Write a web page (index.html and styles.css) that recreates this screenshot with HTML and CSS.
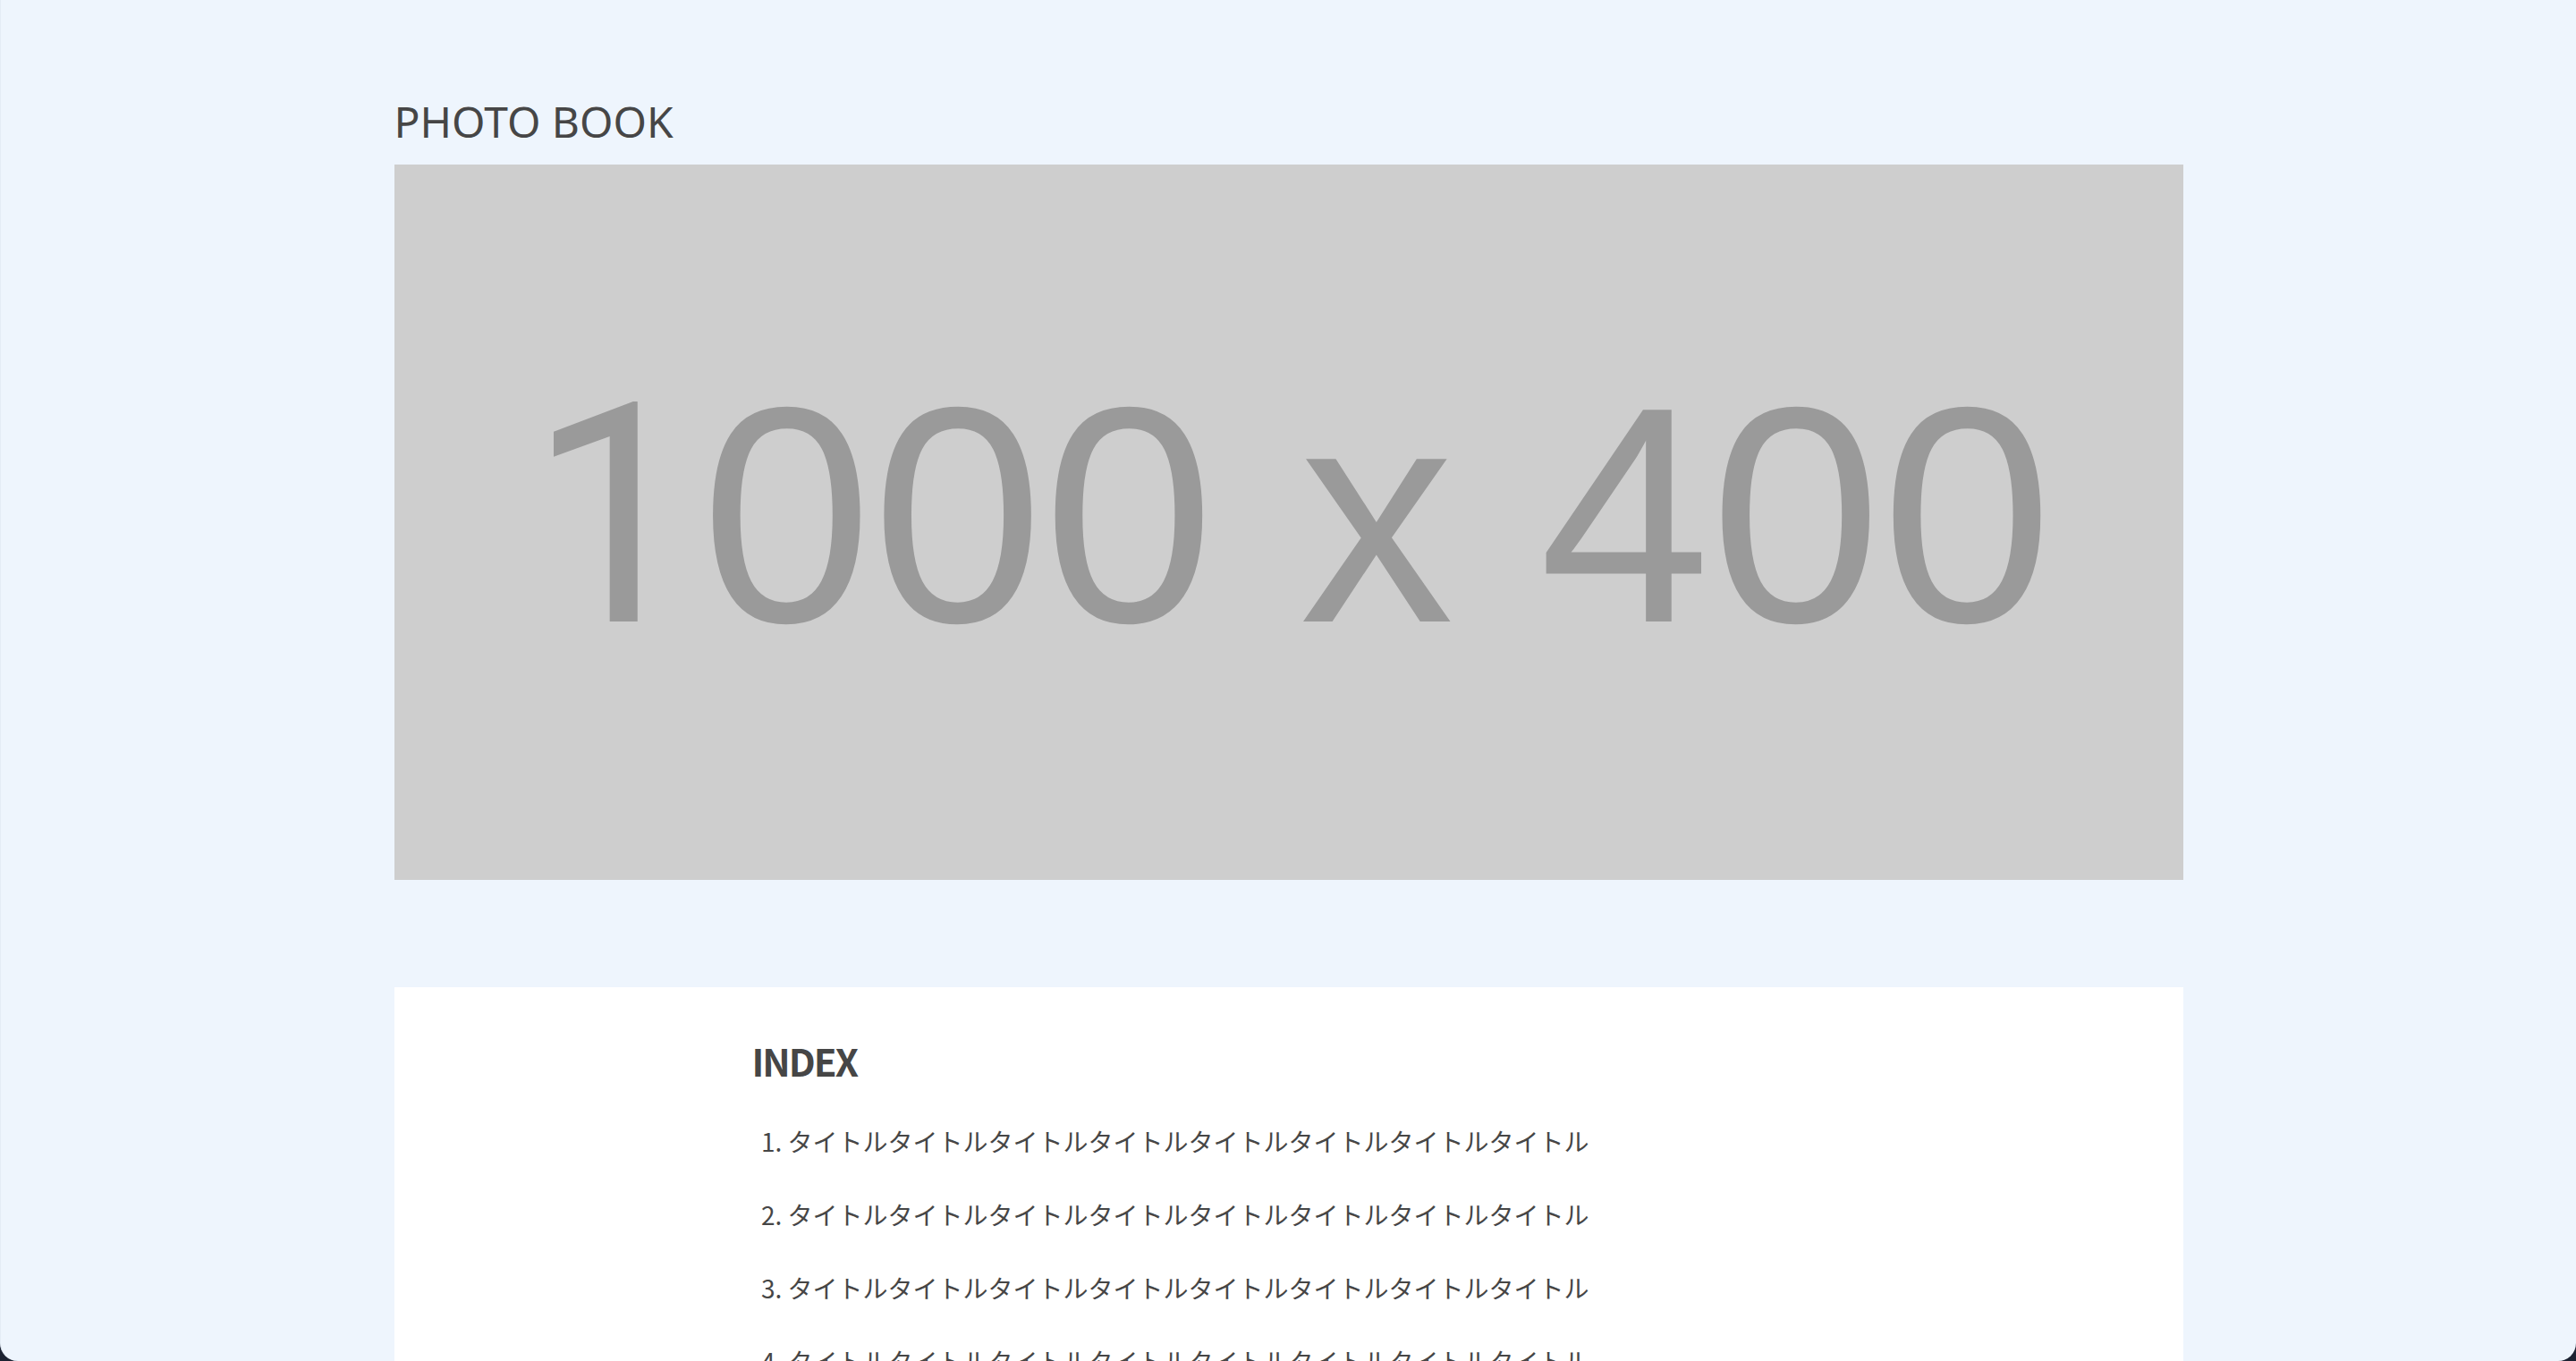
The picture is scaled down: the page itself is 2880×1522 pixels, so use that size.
FILE: index.html
```html
<!DOCTYPE html>
<html lang="ja">
<head>
<meta charset="utf-8">
<title>PHOTO BOOK</title>
<link rel="stylesheet" href="styles.css">
</head>
<body>
<div class="screen">
  <main class="container">
    <h1 class="site-title">PHOTO BOOK</h1>
    <div class="hero"><span class="hero-label"><span class="hero-one">1</span>000 x 400</span></div>
    <section class="index-box">
      <div class="index-inner">
        <h2 class="index-title">INDEX</h2>
        <ol class="index-list">
          <li>タイトルタイトルタイトルタイトルタイトルタイトルタイトルタイトル</li>
          <li>タイトルタイトルタイトルタイトルタイトルタイトルタイトルタイトル</li>
          <li>タイトルタイトルタイトルタイトルタイトルタイトルタイトルタイトル</li>
          <li>タイトルタイトルタイトルタイトルタイトルタイトルタイトルタイトル</li>
          <li>タイトルタイトルタイトルタイトルタイトルタイトルタイトルタイトル</li>
        </ol>
      </div>
    </section>
  </main>
</div>
</body>
</html>
```

FILE: styles.css
```css
html, body {
  margin: 0;
  padding: 0;
  background: #1c2232;
}

.screen {
  height: 100vh;
  overflow: hidden;
  background: #eef5fd;
  border-radius: 0 0 20px 20px;
  border-left: 1px solid #e4ecf5;
  box-sizing: border-box;
  color: #464646;
  font-family: "Noto Sans CJK JP", "Noto Sans", sans-serif;
}

.container {
  width: 2000px;
  margin: 0 auto;
  padding-top: 100px;
}

.site-title {
  margin: 0 0 12px;
  font-family: "Noto Sans", "Noto Sans CJK JP", sans-serif;
  font-weight: 400;
  font-size: 48px;
  line-height: 72px;
  color: #464646;
}

.hero {
  height: 800px;
  background: #cecece;
  display: flex;
  align-items: center;
  justify-content: center;
  padding-bottom: 14px;
  box-sizing: border-box;
}

.hero-label {
  font-family: "Liberation Sans", Arial, sans-serif;
  font-size: 344px;
  color: #9a9a9a;
  line-height: 1;
  padding-left: 4px;
}

.hero-one {
  font-family: Roboto, "Liberation Sans", sans-serif;
}

.index-box {
  margin-top: 120px;
  background: #ffffff;
  padding: 50px 0 60px;
}

.index-inner {
  width: 1200px;
  margin: 0 auto;
}

.index-title {
  margin: 0;
  font-size: 42px;
  font-weight: 700;
  line-height: 63px;
  letter-spacing: -2px;
}

.index-list {
  margin: 38px 0 0;
  padding-left: 40px;
  font-size: 28px;
  line-height: 42px;
}

.index-list li {
  margin-bottom: 40px;
}
```
